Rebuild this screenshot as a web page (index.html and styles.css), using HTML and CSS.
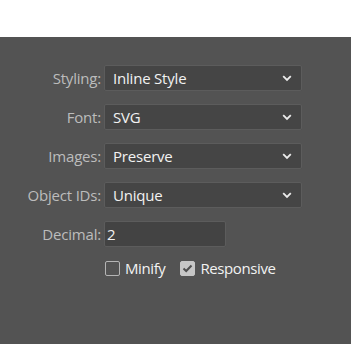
FILE: index.html
```html
<!DOCTYPE html>
<html>
<head>
  <link rel="stylesheet" href="styles.css">
</head>
<body>
  <div class="top-strip"></div>
  <div class="panel">
    <div class="options">
      <label class="opt-label">Styling:</label>
      <div class="select"><span>Inline Style</span><svg class="chev" width="10" height="7" viewBox="0 0 10 7"><path d="M1.2 1.2 L5 5 L8.8 1.2" fill="none" stroke="#ececec" stroke-width="1.8"/></svg></div>

      <label class="opt-label">Font:</label>
      <div class="select"><span>SVG</span><svg class="chev" width="10" height="7" viewBox="0 0 10 7"><path d="M1.2 1.2 L5 5 L8.8 1.2" fill="none" stroke="#ececec" stroke-width="1.8"/></svg></div>

      <label class="opt-label">Images:</label>
      <div class="select"><span>Preserve</span><svg class="chev" width="10" height="7" viewBox="0 0 10 7"><path d="M1.2 1.2 L5 5 L8.8 1.2" fill="none" stroke="#ececec" stroke-width="1.8"/></svg></div>

      <label class="opt-label">Object IDs:</label>
      <div class="select"><span>Unique</span><svg class="chev" width="10" height="7" viewBox="0 0 10 7"><path d="M1.2 1.2 L5 5 L8.8 1.2" fill="none" stroke="#ececec" stroke-width="1.8"/></svg></div>

      <label class="opt-label">Decimal:</label>
      <div class="input">2</div>
    </div>
    <div class="checks">
      <div class="check"><span class="box"></span>Minify</div>
      <div class="check"><span class="box on"><svg width="11" height="9" viewBox="0 0 11 9"><path d="M1.5 4.5 L4.2 7 L9.5 1.5" fill="none" stroke="#4e4e4e" stroke-width="2"/></svg></span>Responsive</div>
    </div>
  </div>
</body>
</html>
```

FILE: styles.css
```css
body {
  margin: 0;
  background: #ffffff;
  font-family: "Open Sans", "Noto Sans", sans-serif;
  font-size: 15px;
}

.top-strip {
  height: 37px;
  background: #ffffff;
}

.panel {
  background: #535353;
  height: 307px;
  padding-top: 28px;
  box-sizing: border-box;
}

.options {
  display: grid;
  grid-template-columns: 101px 198px;
  column-gap: 3px;
  row-gap: 13px;
  align-items: center;
}

.opt-label {
  text-align: right;
  color: #bcbcbc;
  letter-spacing: -0.2px;
}

.select,
.input {
  height: 26px;
  box-sizing: border-box;
  background: #454545;
  border: 1px solid #5c5c5c;
  border-radius: 2px;
  color: #f2f2f2;
  display: flex;
  align-items: center;
  justify-content: space-between;
  padding: 0 8px 0 8px;
  letter-spacing: -0.2px;
}

.input {
  width: 122px;
  padding-left: 2px;
  background: #434343;
}

.chev {
  margin-right: 1px;
}

.checks {
  display: flex;
  gap: 15px;
  padding-left: 105px;
  margin-top: 11px;
}

.check {
  display: flex;
  align-items: center;
  gap: 5px;
  color: #f2f2f2;
  letter-spacing: -0.4px;
}

.box {
  width: 15px;
  height: 15px;
  box-sizing: border-box;
  border: 1px solid #b4b4b4;
  border-radius: 2px;
  display: flex;
  align-items: center;
  justify-content: center;
}

.box.on {
  background: #c6c6c6;
  border-color: #c6c6c6;
}
```
